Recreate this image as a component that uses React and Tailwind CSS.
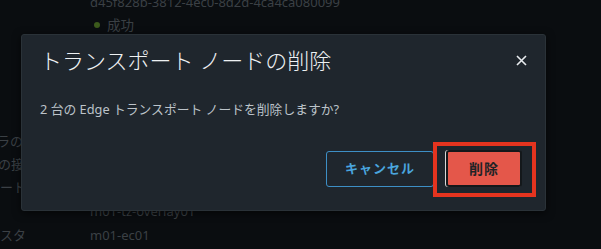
import React from 'react';

const rows = [
  { label: '', value: 'd45f828b-3812-4ec0-8d2d-4ca4ca080099', h: 'h-[22px] -mt-[8px]' },
  { label: '', value: 'status', h: 'h-[22px]' },
  { spacer: true },
  { label: 'ラの', value: '', h: 'h-[23px]', shift: '-ml-[3px]' },
  { label: 'の接', value: '', h: 'h-[23px]', shift: '-ml-[2px]' },
  { label: 'ート', value: '', h: 'h-[23px]' },
  { label: '', value: 'm01-tz-overlay01', h: 'h-[25px]' },
  { label: 'スタ', value: 'm01-ec01', h: 'h-[23px]' },
];

const Background = () => (
  <div className="flex flex-col text-[13px] text-[#3b4045]">
    {rows.map((r, i) =>
      r.spacer ? (
        <div key={i} className="h-[94px]" />
      ) : (
        <div key={i} className={`flex items-center ${r.h}`}>
          <span className={`w-[90px] shrink-0 whitespace-nowrap ${r.shift || ''}`}>{r.label}</span>
          {r.value === 'status' ? (
            <span className="flex items-center gap-[7px] pl-[4px] text-[13.5px]">
              <span className="h-[6px] w-[6px] rounded-full bg-[#3c5a1c]" />
              成功
            </span>
          ) : (
            <span className="whitespace-nowrap">{r.value}</span>
          )}
        </div>
      )
    )}
  </div>
);

const App = () => {
  return (
    <div
      className="relative h-[249px] w-[601px] overflow-hidden bg-[#0a0d10]"
      style={{ fontFamily: '"Noto Sans", "Noto Sans CJK JP", sans-serif' }}
    >
      <Background />

      <div className="absolute left-[21px] top-[34px] w-[525px] rounded-[3px] border border-[#2a3238] bg-[#1f262d] pt-[11px] pl-[18px] pr-[17px] pb-[23px] shadow-[0_2px_8px_rgba(0,0,0,0.6)]">
        <div className="flex h-[28px] items-center justify-between">
          <h2 className="text-[22px] font-light leading-[28px] text-[#eef1f3]">トランスポート ノードの削除</h2>
          <button className="flex h-[14px] w-[14px] items-center justify-center text-[#e8ecef]" aria-label="close">
            <svg width="11" height="11" viewBox="0 0 11 11" fill="none">
              <path d="M1 1L10 10M10 1L1 10" stroke="currentColor" strokeWidth="1.6" />
            </svg>
          </button>
        </div>
        <p className="mt-[26px] text-[12.8px] leading-[18px] text-[#bcc3c9]">
          2 台の Edge トランスポート ノードを削除しますか?
        </p>
        <div className="mt-[32px] flex items-end justify-end gap-[12px] pr-[6px]">
          <button className="h-[36px] w-[108px] rounded-[3px] border border-[#3d8fc6] text-[13px] font-bold tracking-[0.08em] text-[#4aa5de]">
            キャンセル
          </button>
          <button className="h-[37px] w-[76px] rounded-[3px] border-2 border-[#14181b] bg-[#e4574a] text-[14px] font-bold tracking-[0.08em] text-[#1f2326] shadow-[-1px_0_0_0_#d8d8d8]">
            削除
          </button>
        </div>
      </div>

      <div className="absolute left-[433px] top-[142px] h-[55px] w-[103px] border-[4px] border-[#e5341f]" />
    </div>
  );
};

export default App;
